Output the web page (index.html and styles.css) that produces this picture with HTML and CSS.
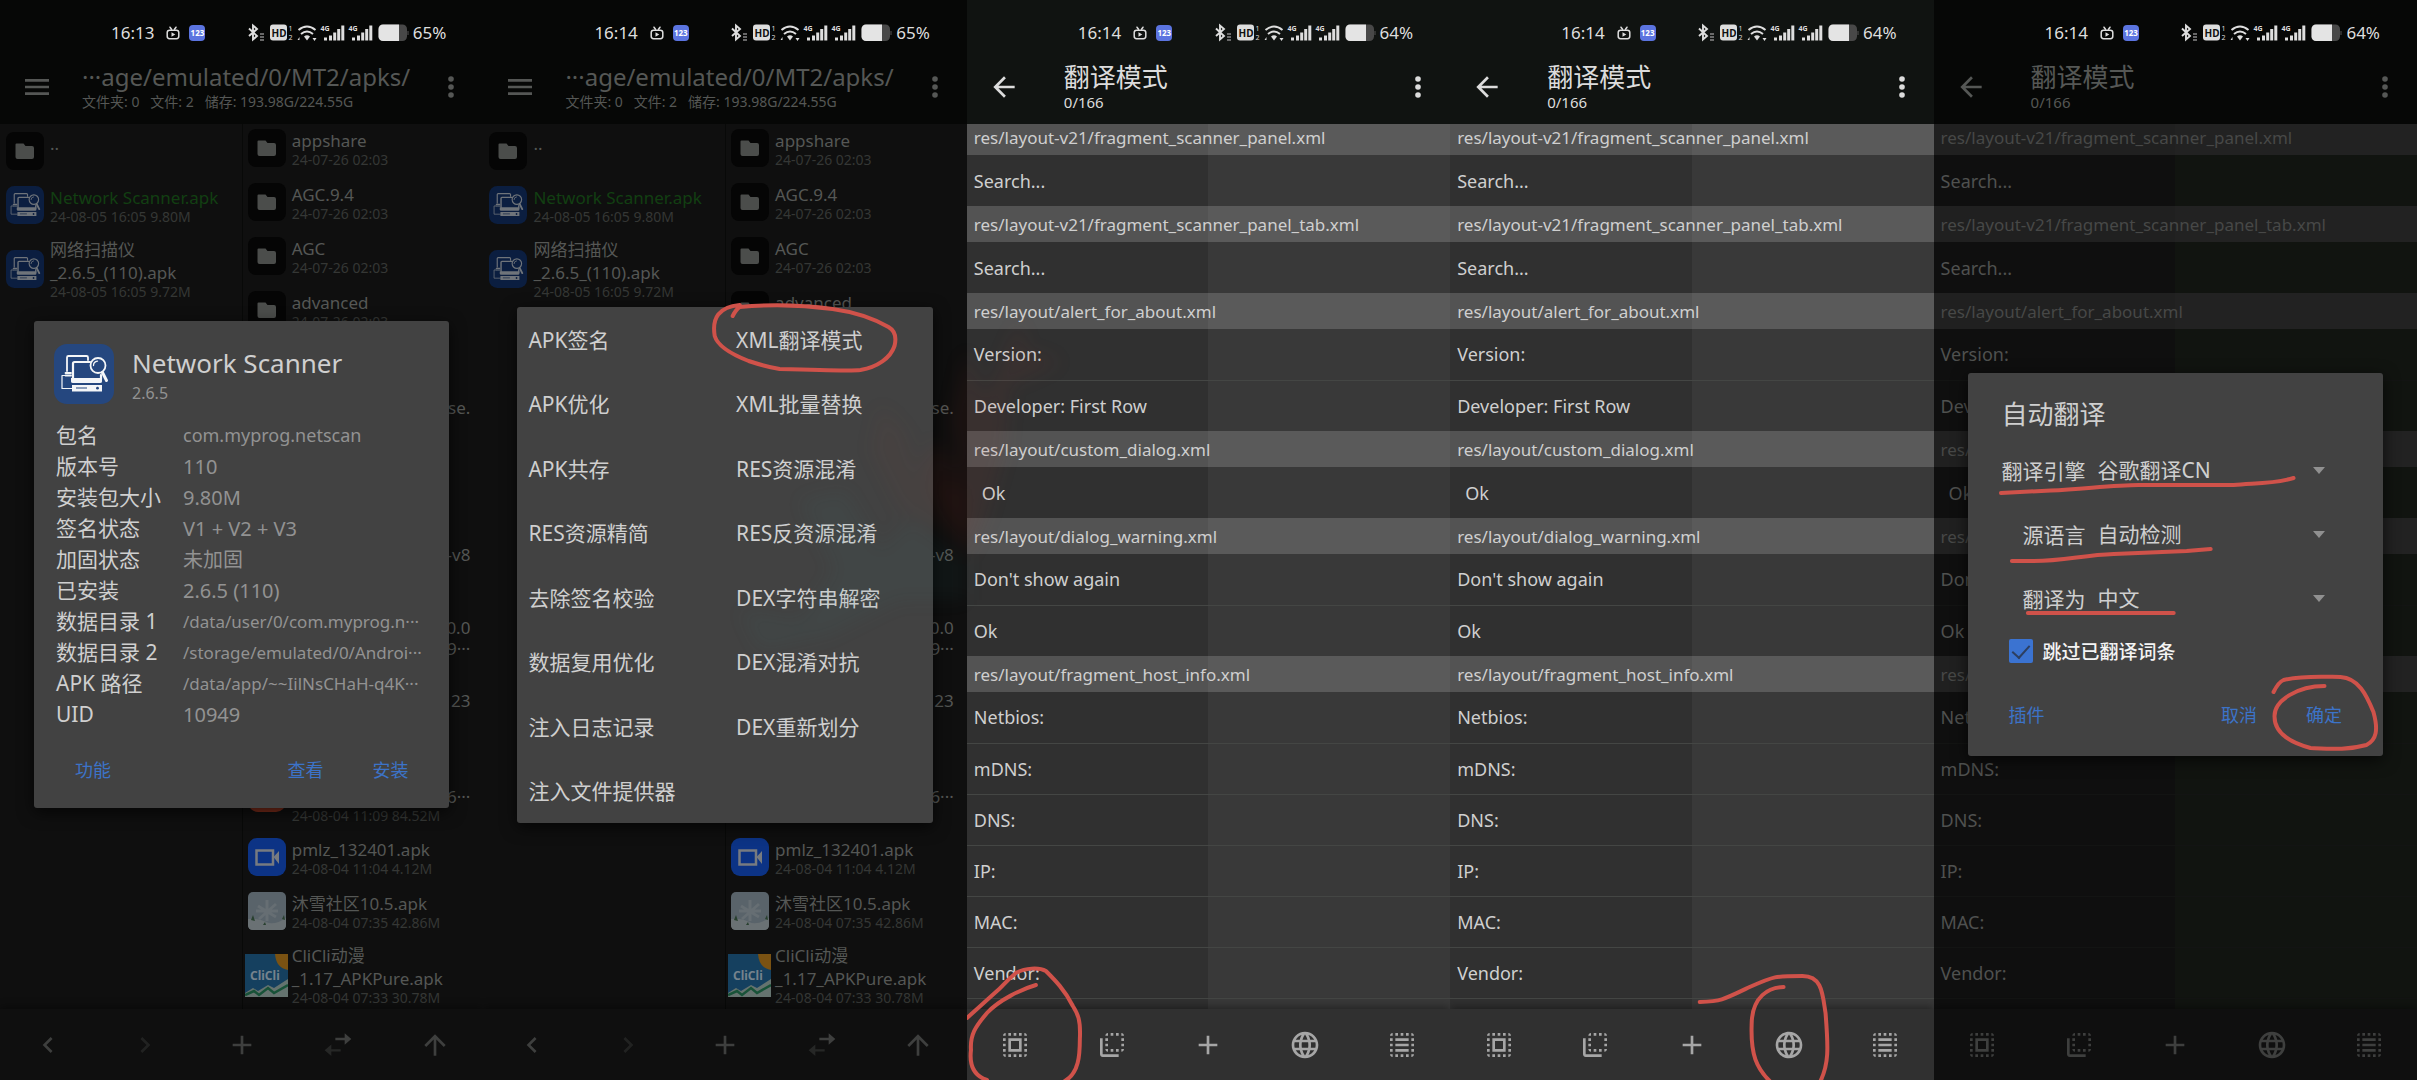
FILE: index.html
```html
<!DOCTYPE html>
<html lang="zh-CN">
<head>
<meta charset="utf-8">
<meta name="viewport" content="width=device-width, initial-scale=1">
<title>MT2 翻译模式</title>
<link rel="stylesheet" href="styles.css">
</head>
<body>
<svg class="defs" aria-hidden="true">
  <symbol id="menu" viewBox="0 0 24 24"><path d="M3 18h18v-2H3v2zm0-5h18v-2H3v2zm0-7v2h18V6H3z"/></symbol>
  <symbol id="more" viewBox="0 0 24 24"><circle cx="12" cy="6" r="2.1"/><circle cx="12" cy="12" r="2.1"/><circle cx="12" cy="18" r="2.1"/></symbol>
  <symbol id="back" viewBox="0 0 24 24"><path d="M20 11H7.83l5.59-5.59L12 4l-8 8 8 8 1.41-1.41L7.83 13H20v-2z"/></symbol>
  <symbol id="left" viewBox="0 0 24 24"><path d="M15.41 7.41L14 6l-6 6 6 6 1.41-1.41L10.83 12z"/></symbol>
  <symbol id="right" viewBox="0 0 24 24"><path d="M10 6L8.59 7.41 13.17 12l-4.58 4.59L10 18l6-6z"/></symbol>
  <symbol id="add" viewBox="0 0 24 24"><path d="M19 13h-6v6h-2v-6H5v-2h6V5h2v6h6v2z"/></symbol>
  <symbol id="swap" viewBox="0 0 24 24"><path d="M10 6.600h7V3.200l5 4.300-5 4.300V8.400h-7z"/><path opacity=".5" d="M14 15.100H7v-3.400l-5 4.300 5 4.300v-3.400h7z"/></symbol>
  <symbol id="up" viewBox="0 0 24 24"><path d="M4 12l1.410 1.410L11 7.830V20h2V7.830l5.580 5.590L20 12l-8-8-8 8z"/></symbol>
  <symbol id="all" viewBox="0 0 24 24"><path d="M3 5h2V3c-1.100 0-2 .9-2 2zm0 8h2v-2H3v2zm4 8h2v-2H7v2zM3 9h2V7H3v2zm10-6h-2v2h2V3zm6 0v2h2c0-1.100-.9-2-2-2zM5 21v-2H3c0 1.100.9 2 2 2zm-2-4h2v-2H3v2zM9 3H7v2h2V3zm2 18h2v-2h-2v2zm8-8h2v-2h-2v2zm0 8c1.100 0 2-.9 2-2h-2v2zm0-12h2V7h-2v2zm0 8h2v-2h-2v2zm-4 4h2v-2h-2v2zm0-16h2V3h-2v2zM7 17h10V7H7v10zm2-8h6v6H9V9z"/></symbol>
  <symbol id="flip" viewBox="0 0 24 24"><path d="M9 7H7v2h2V7zm0 4H7v2h2v-2zm0-8c-1.110 0-2 .9-2 2h2V3zm4 12h-2v2h2v-2zm6-12v2h2c0-1.100-.9-2-2-2zm-6 0h-2v2h2V3zM9 17v-2H7c0 1.100.89 2 2 2zm10-4h2v-2h-2v2zm0-4h2V7h-2v2zm0 8c1.100 0 2-.9 2-2h-2v2zM5 7H3v12c0 1.100.89 2 2 2h12v-2H5V7zm10-2h2V3h-2v2zm0 12h2v-2h-2v2z"/></symbol>
  <symbol id="globe" viewBox="0 0 24 24"><path d="M11.990 2C6.470 2 2 6.480 2 12s4.470 10 9.990 10C17.520 22 22 17.520 22 12S17.520 2 11.990 2zm6.930 6h-2.950c-.32-1.250-.78-2.450-1.380-3.560 1.840.63 3.370 1.910 4.330 3.560zM12 4.040c.83 1.200 1.480 2.530 1.910 3.960h-3.820c.43-1.430 1.080-2.760 1.910-3.960zM4.260 14C4.100 13.360 4 12.690 4 12s.1-1.360.26-2h3.380c-.08.66-.14 1.320-.14 2s.06 1.340.14 2H4.260zm.82 2h2.950c.32 1.250.78 2.450 1.380 3.560-1.840-.63-3.370-1.900-4.330-3.560zm2.950-8H5.080c.96-1.660 2.490-2.930 4.330-3.560C8.810 5.550 8.350 6.750 8.030 8zM12 19.960c-.83-1.200-1.480-2.530-1.910-3.960h3.820c-.43 1.430-1.080 2.760-1.910 3.960zM14.340 14H9.660c-.09-.66-.16-1.320-.16-2s.07-1.350.16-2h4.680c.09.65.16 1.320.16 2s-.07 1.340-.16 2zm.25 5.560c.6-1.110 1.060-2.310 1.380-3.560h2.950c-.96 1.650-2.490 2.930-4.330 3.560zM16.360 14c.08-.66.14-1.320.14-2s-.06-1.340-.14-2h3.380c.16.64.26 1.310.26 2s-.1 1.360-.26 2h-3.380z"/></symbol>
  <symbol id="lines" viewBox="0 0 24 24"><path d="M3 5h2V3c-1.100 0-2 .9-2 2zm0 8h2v-2H3v2zm4 8h2v-2H7v2zM3 9h2V7H3v2zm10-6h-2v2h2V3zm6 0v2h2c0-1.100-.9-2-2-2zM5 21v-2H3c0 1.100.9 2 2 2zm-2-4h2v-2H3v2zM9 3H7v2h2V3zm2 18h2v-2h-2v2zm8-8h2v-2h-2v2zm0 8c1.100 0 2-.9 2-2h-2v2zm0-12h2V7h-2v2zm0 8h2v-2h-2v2zm-4 4h2v-2h-2v2zm0-16h2V3h-2v2zM7 7h10v2H7zM7 11h10v2H7zM7 15h10v2H7z"/></symbol>
  <symbol id="folder" viewBox="0 0 38 38"><rect width="38" height="38" rx="8" fill="#050505"/><path fill="#4b4d4b" d="M10.500 11.500h7l2 2.500h6.500a2 2 0 0 1 2 2v9a2 2 0 0 1-2 2H11.500a2 2 0 0 1-2-2V12.500a1 1 0 0 1 1-1z"/></symbol>
  <symbol id="scanner" viewBox="0 0 60 60">
    <rect width="60" height="60" rx="13" fill="var(--scan-bg)"/>
    <g fill="none" stroke="var(--scan-fg)" stroke-width="1.800" stroke-linejoin="round" stroke-linecap="round">
      <path d="M34 16v-2.500q0-1.500-1.500-1.500H14.500q-1.500 0-1.500 1.500V27"/>
      <path d="M11.500 29H17M11.500 31.500H17"/>
      <path stroke-width="1.200" d="M11 31.500H8V44.500H18"/>
      <path stroke-width="2.200" d="M36 18H20.500q-1.500 0-1.500 1.500V35H47V31"/>
      <circle cx="44" cy="21.500" r="7.500"/>
      <path d="M39.500 21.500q0-3.800 4-4.400" stroke-width="1.300"/>
      <path stroke-width="3" d="M48.500 28.500L52.500 36.500"/>
    </g>
    <path fill="var(--scan-fg)" d="M17 34H48V37.500Q48 39 46 39H19Q17 39 17 37.500zM18 41H48V47.500H18z"/>
    <path d="M22 44H33" stroke="var(--scan-bg)" stroke-width="1"/><circle cx="43.500" cy="44.200" r="1.400" fill="var(--scan-bg)"/>
  </symbol>
  <symbol id="video" viewBox="0 0 38 38"><rect width="38" height="38" rx="9" fill="#0c3385"/><path fill="none" stroke="#777b80" stroke-width="2.500" d="M8.500 12.500H25V26.500H8.500z"/><path fill="#777b80" d="M25.500 19l5.500-6v13z"/></symbol>
  <symbol id="snow" viewBox="0 0 38 38"><rect width="38" height="38" rx="5" fill="#59636a"/><path fill="#6a7174" d="M0 27q10-1 18 3t20-4v7q0 5-5 5H5q-5 0-5-5z"/><path d="M19 8v21M10 14l18 11M28 12L11 27M8 19h22" stroke="#666e73" stroke-width="3"/><path fill="#28402f" d="M3 28l2-5 2 6zM34 27l2-4 1 5zM15 33l2-3 1 3z"/></symbol>
  <symbol id="clicli" viewBox="0 0 43 43"><path fill="#15405f" d="M0 0h43v43H0z"/><path fill="#7a5212" d="M30 0h13v16Q31 14 30 0z"/><path fill="#65736f" d="M0 39l8-5 5 3 10-6 6 3 14-9v18H0z"/><path d="M0 41l9-4 5 4 9-7 6 5 14-8" stroke="#185238" stroke-width="2.500" fill="none"/><text x="5" y="26" font-size="12" font-weight="700" fill="#75838d">CliCli</text></symbol>
  <symbol id="tv" viewBox="0 0 14 14"><g fill="none" stroke="currentColor" stroke-width="1.500" stroke-linecap="round"><rect x="1.200" y="4.200" width="11.600" height="8.500" rx="2.400"/><path d="M4 1.200l1.500 2M10 1.200L8.500 3.200"/></g><path fill="currentColor" d="M5.500 6.200v4.600L9.300 8.500z"/></symbol>
  <symbol id="signals" viewBox="0 0 162 20">
    <path d="M2 5.500L10 13 6 16.500V2.500L10 6 2 13" fill="none" stroke="currentColor" stroke-width="1.900"/>
    <path d="M13 11h4M13 14h4M13 17h4" stroke="#888" stroke-width="1.500"/>
    <rect x="23" y="1.500" width="17" height="16" rx="3" fill="currentColor"/>
    <text x="24.500" y="13.500" font-size="10" font-weight="700" fill="#111">HD</text>
    <text x="41.500" y="8" font-size="7" fill="currentColor">1</text><text x="41.500" y="17" font-size="7" fill="currentColor">2</text>
    <g fill="none" stroke="currentColor" stroke-width="2"><path d="M51.500 7q8.500-7 17 0M54 11q6-5 12 0"/></g>
    <path fill="currentColor" d="M57 13.500q3-2.500 6 0l-3 4zM50.500 17l2-3v3zM65.500 15h4l-2 3z"/>
    <g id="bars" fill="currentColor"><text x="73.500" y="7.500" font-size="7" font-weight="700">4G</text><path d="M77 14.500h3v3h-3zM82 12.500h3v5h-3zM86.200 9.500h3v8h-3zM90.200 6h3v11.500h-3zM94.300 2.500h3v15h-3z"/></g>
    <use href="#bars" x="28"/>
    <rect x="131.500" y="1.500" width="28.500" height="16.500" rx="4.500" fill="#484848"/><path fill="#e4e4e4" d="M136 1.500h16V18h-16a4.500 4.500 0 0 1-4.500-4.500V6a4.500 4.500 0 0 1 4.500-4.500z"/><path d="M161 8v4" stroke="#555"/>
  </symbol>
</svg>

<main class="board">

<section class="phone dim">
  <div class="status"><span>16:13</span><svg class="tv"><use href="#tv"/></svg><span class="badge">123</span><svg class="signals"><use href="#signals"/></svg><span>65%</span></div>
  <header class="bar"><button aria-label="菜单"><svg><use href="#menu"/></svg></button><div class="heading"><p class="path">···age/emulated/0/MT2/apks/</p><p class="count">文件夹: 0 &nbsp; 文件: 2 &nbsp; 储存: 193.98G/224.55G</p></div><button aria-label="更多"><svg><use href="#more"/></svg></button></header>
  <div class="files">
    <ul class="pane">
      <li><svg><use href="#folder"/></svg><div><p>..</p><small>&nbsp;</small></div></li>
      <li><svg><use href="#scanner"/></svg><div><p class="green">Network Scanner.apk</p><small>24-08-05 16:05 9.80M</small></div></li>
      <li><svg><use href="#scanner"/></svg><div><p>网络扫描仪<br>_2.6.5_(110).apk</p><small>24-08-05 16:05 9.72M</small></div></li>
    </ul>
    <ul class="pane scrolled">
      <li><svg><use href="#folder"/></svg><div><p>appshare</p><small>24-07-26 02:03</small></div></li>
      <li><svg><use href="#folder"/></svg><div><p>AGC.9.4</p><small>24-07-26 02:03</small></div></li>
      <li><svg><use href="#folder"/></svg><div><p>AGC</p><small>24-07-26 02:03</small></div></li>
      <li><svg><use href="#folder"/></svg><div><p>advanced</p><small>24-07-26 02:03</small></div></li>
      <li class="tails"><span>se.</span><span>-v8</span><span>0.0</span><span>9···</span><span>23</span></li>
      <li><span class="red-icon"></span><div class="wide"><p>&nbsp;<br><span class="end">6···</span></p><small>24-08-04 11:09 84.52M</small></div></li>
      <li><svg><use href="#video"/></svg><div><p>pmlz_132401.apk</p><small>24-08-04 11:04 4.12M</small></div></li>
      <li><svg><use href="#snow"/></svg><div><p>沐雪社区10.5.apk</p><small>24-08-04 07:35 42.86M</small></div></li>
      <li><svg class="full"><use href="#clicli"/></svg><div><p>CliCli动漫<br>_1.17_APKPure.apk</p><small>24-08-04 07:33 30.78M</small></div></li>
    </ul>
  </div>
  <nav class="tools"><button aria-label="后退"><svg><use href="#left"/></svg></button><button class="off" aria-label="前进"><svg><use href="#right"/></svg></button><button aria-label="新建"><svg><use href="#add"/></svg></button><button aria-label="同步"><svg><use href="#swap"/></svg></button><button aria-label="上级"><svg><use href="#up"/></svg></button></nav>
  <div class="overlay">
    <div class="dialog" role="dialog" aria-label="Network Scanner">
      <div class="app"><svg><use href="#scanner"/></svg><div><h2>Network Scanner</h2><p>2.6.5</p></div></div>
      <dl class="info">
        <dt>包名</dt><dd class="package">com.myprog.netscan</dd>
        <dt>版本号</dt><dd>110</dd>
        <dt>安装包大小</dt><dd>9.80M</dd>
        <dt>签名状态</dt><dd>V1 + V2 + V3</dd>
        <dt>加固状态</dt><dd>未加固</dd>
        <dt>已安装</dt><dd>2.6.5 (110)</dd>
        <dt>数据目录 1</dt><dd class="long">/data/user/0/com.myprog.n···</dd>
        <dt>数据目录 2</dt><dd class="long">/storage/emulated/0/Androi···</dd>
        <dt>APK 路径</dt><dd class="long">/data/app/~~IilNsCHaH-q4K···</dd>
        <dt>UID</dt><dd>10949</dd>
      </dl>
      <div class="actions"><button>功能</button><button>查看</button><button>安装</button></div>
    </div>
  </div>
</section>

<section class="phone dim">
  <div class="status"><span>16:14</span><svg class="tv"><use href="#tv"/></svg><span class="badge">123</span><svg class="signals"><use href="#signals"/></svg><span>65%</span></div>
  <header class="bar"><button aria-label="菜单"><svg><use href="#menu"/></svg></button><div class="heading"><p class="path">···age/emulated/0/MT2/apks/</p><p class="count">文件夹: 0 &nbsp; 文件: 2 &nbsp; 储存: 193.98G/224.55G</p></div><button aria-label="更多"><svg><use href="#more"/></svg></button></header>
  <div class="files">
    <ul class="pane">
      <li><svg><use href="#folder"/></svg><div><p>..</p><small>&nbsp;</small></div></li>
      <li><svg><use href="#scanner"/></svg><div><p class="green">Network Scanner.apk</p><small>24-08-05 16:05 9.80M</small></div></li>
      <li><svg><use href="#scanner"/></svg><div><p>网络扫描仪<br>_2.6.5_(110).apk</p><small>24-08-05 16:05 9.72M</small></div></li>
    </ul>
    <ul class="pane scrolled">
      <li><svg><use href="#folder"/></svg><div><p>appshare</p><small>24-07-26 02:03</small></div></li>
      <li><svg><use href="#folder"/></svg><div><p>AGC.9.4</p><small>24-07-26 02:03</small></div></li>
      <li><svg><use href="#folder"/></svg><div><p>AGC</p><small>24-07-26 02:03</small></div></li>
      <li><svg><use href="#folder"/></svg><div><p>advanced</p><small>&nbsp;</small></div></li>
      <li class="tails"><span>se.</span><span>-v8</span><span>0.0</span><span>9···</span><span>23</span></li>
      <li><span class="red-icon"></span><div class="wide"><p>&nbsp;<br><span class="end">6···</span></p><small>&nbsp;</small></div></li>
      <li><svg><use href="#video"/></svg><div><p>pmlz_132401.apk</p><small>24-08-04 11:04 4.12M</small></div></li>
      <li><svg><use href="#snow"/></svg><div><p>沐雪社区10.5.apk</p><small>24-08-04 07:35 42.86M</small></div></li>
      <li><svg class="full"><use href="#clicli"/></svg><div><p>CliCli动漫<br>_1.17_APKPure.apk</p><small>24-08-04 07:33 30.78M</small></div></li>
    </ul>
  </div>
  <nav class="tools"><button aria-label="后退"><svg><use href="#left"/></svg></button><button class="off" aria-label="前进"><svg><use href="#right"/></svg></button><button aria-label="新建"><svg><use href="#add"/></svg></button><button aria-label="同步"><svg><use href="#swap"/></svg></button><button aria-label="上级"><svg><use href="#up"/></svg></button></nav>
  <div class="overlay">
    <div class="dialog functions" role="dialog" aria-label="功能">
      <button>APK签名</button><button>XML翻译模式</button>
      <button>APK优化</button><button>XML批量替换</button>
      <button>APK共存</button><button>RES资源混淆</button>
      <button>RES资源精简</button><button>RES反资源混淆</button>
      <button>去除签名校验</button><button>DEX字符串解密</button>
      <button>数据复用优化</button><button>DEX混淆对抗</button>
      <button>注入日志记录</button><button>DEX重新划分</button>
      <button>注入文件提供器</button>
    </div>
  </div>
  <svg class="ink" viewBox="0 0 484 1080" preserveAspectRatio="none"><path d="M250 316C252 312 254 309 257 307C290 304 320 305 350 309C372 312 392 319 406 327C413 331 414 338 412 346C408 358 395 367 378 370C370 371 330 370 297 369C285 367 275 364 266 361C248 354 235 346 232 336C229 318 236 307 257 305"/></svg>
</section>

<section class="phone">
  <div class="status"><span>16:14</span><svg class="tv"><use href="#tv"/></svg><span class="badge">123</span><svg class="signals"><use href="#signals"/></svg><span>64%</span></div>
  <header class="bar"><button aria-label="返回"><svg><use href="#back"/></svg></button><div class="heading inset"><h1>翻译模式</h1><p class="total">0/166</p></div><button aria-label="更多"><svg><use href="#more"/></svg></button></header>
  <div class="strings">
    <table>
      <tr><th colspan="2">res/layout-v21/fragment_scanner_panel.xml</th></tr>
      <tr><td>Search...</td><td></td></tr>
      <tr><th colspan="2">res/layout-v21/fragment_scanner_panel_tab.xml</th></tr>
      <tr><td>Search...</td><td></td></tr>
      <tr><th colspan="2">res/layout/alert_for_about.xml</th></tr>
      <tr><td>Version:</td><td></td></tr>
      <tr><td>Developer: First Row</td><td></td></tr>
      <tr><th colspan="2">res/layout/custom_dialog.xml</th></tr>
      <tr><td class="spaced">Ok</td><td></td></tr>
      <tr><th colspan="2">res/layout/dialog_warning.xml</th></tr>
      <tr><td>Don't show again</td><td></td></tr>
      <tr><td>Ok</td><td></td></tr>
      <tr><th colspan="2">res/layout/fragment_host_info.xml</th></tr>
      <tr><td>Netbios:</td><td></td></tr>
      <tr><td>mDNS:</td><td></td></tr>
      <tr><td>DNS:</td><td></td></tr>
      <tr><td>IP:</td><td></td></tr>
      <tr><td>MAC:</td><td></td></tr>
      <tr><td>Vendor:</td><td></td></tr>
      <tr><td></td><td></td></tr>
    </table>
  </div>
  <nav class="tools"><button aria-label="全选"><svg><use href="#all"/></svg></button><button aria-label="反选"><svg><use href="#flip"/></svg></button><button aria-label="添加"><svg><use href="#add"/></svg></button><button aria-label="翻译"><svg><use href="#globe"/></svg></button><button aria-label="列表"><svg><use href="#lines"/></svg></button></nav>
  <svg class="ink" viewBox="0 0 484 1080" preserveAspectRatio="none"><path d="M69 985C55 989 32 1000 20 1013C8 1027 3 1035 4 1050C2 1066 8 1076 20 1080M98 1081C112 1073 113 1055 113 1039C114 1020 111 1014 106 1006C98 990 88 980 79 971C72 967 58 968 49 973C38 982 36 986 30 991L0 1018"/></svg>
</section>

<section class="phone">
  <div class="status"><span>16:14</span><svg class="tv"><use href="#tv"/></svg><span class="badge">123</span><svg class="signals"><use href="#signals"/></svg><span>64%</span></div>
  <header class="bar"><button aria-label="返回"><svg><use href="#back"/></svg></button><div class="heading inset"><h1>翻译模式</h1><p class="total">0/166</p></div><button aria-label="更多"><svg><use href="#more"/></svg></button></header>
  <div class="strings">
    <table>
      <tr><th colspan="2">res/layout-v21/fragment_scanner_panel.xml</th></tr>
      <tr><td>Search...</td><td></td></tr>
      <tr><th colspan="2">res/layout-v21/fragment_scanner_panel_tab.xml</th></tr>
      <tr><td>Search...</td><td></td></tr>
      <tr><th colspan="2">res/layout/alert_for_about.xml</th></tr>
      <tr><td>Version:</td><td></td></tr>
      <tr><td>Developer: First Row</td><td></td></tr>
      <tr><th colspan="2">res/layout/custom_dialog.xml</th></tr>
      <tr><td class="spaced">Ok</td><td></td></tr>
      <tr><th colspan="2">res/layout/dialog_warning.xml</th></tr>
      <tr><td>Don't show again</td><td></td></tr>
      <tr><td>Ok</td><td></td></tr>
      <tr><th colspan="2">res/layout/fragment_host_info.xml</th></tr>
      <tr><td>Netbios:</td><td></td></tr>
      <tr><td>mDNS:</td><td></td></tr>
      <tr><td>DNS:</td><td></td></tr>
      <tr><td>IP:</td><td></td></tr>
      <tr><td>MAC:</td><td></td></tr>
      <tr><td>Vendor:</td><td></td></tr>
      <tr><td></td><td></td></tr>
    </table>
  </div>
  <nav class="tools"><button aria-label="全选"><svg><use href="#all"/></svg></button><button aria-label="反选"><svg><use href="#flip"/></svg></button><button aria-label="添加"><svg><use href="#add"/></svg></button><button aria-label="翻译"><svg><use href="#globe"/></svg></button><button aria-label="列表"><svg><use href="#lines"/></svg></button></nav>
  <svg class="ink" viewBox="0 0 484 1080" preserveAspectRatio="none"><path d="M250 1002C272 1001 273 1000 300 987C325 976 325 976 353 976C373 976 373 995 376 1013C379 1050 379 1064 371 1081M334 987C320 987 302 996 302 1025C301 1055 307 1068 320 1081"/></svg>
</section>

<section class="phone dim">
  <div class="status"><span>16:14</span><svg class="tv"><use href="#tv"/></svg><span class="badge">123</span><svg class="signals"><use href="#signals"/></svg><span>64%</span></div>
  <header class="bar"><button aria-label="返回"><svg><use href="#back"/></svg></button><div class="heading inset"><h1>翻译模式</h1><p class="total">0/166</p></div><button aria-label="更多"><svg><use href="#more"/></svg></button></header>
  <div class="strings">
    <table>
      <tr><th colspan="2">res/layout-v21/fragment_scanner_panel.xml</th></tr>
      <tr><td>Search...</td><td></td></tr>
      <tr><th colspan="2">res/layout-v21/fragment_scanner_panel_tab.xml</th></tr>
      <tr><td>Search...</td><td></td></tr>
      <tr><th colspan="2">res/layout/alert_for_about.xml</th></tr>
      <tr><td>Version:</td><td></td></tr>
      <tr><td>Dev</td><td></td></tr>
      <tr><th colspan="2">res/</th></tr>
      <tr><td class="spaced">Ok</td><td></td></tr>
      <tr><th colspan="2">res/</th></tr>
      <tr><td>Don</td><td></td></tr>
      <tr><td>Ok</td><td></td></tr>
      <tr><th colspan="2">res/</th></tr>
      <tr><td>Net</td><td></td></tr>
      <tr><td>mDNS:</td><td></td></tr>
      <tr><td>DNS:</td><td></td></tr>
      <tr><td>IP:</td><td></td></tr>
      <tr><td>MAC:</td><td></td></tr>
      <tr><td>Vendor:</td><td></td></tr>
      <tr><td></td><td></td></tr>
    </table>
  </div>
  <nav class="tools"><button aria-label="全选"><svg><use href="#all"/></svg></button><button aria-label="反选"><svg><use href="#flip"/></svg></button><button aria-label="添加"><svg><use href="#add"/></svg></button><button aria-label="翻译"><svg><use href="#globe"/></svg></button><button aria-label="列表"><svg><use href="#lines"/></svg></button></nav>
  <div class="overlay">
    <form class="dialog" role="dialog" aria-label="自动翻译">
      <h2 class="form-title">自动翻译</h2>
      <div class="field"><label for="engine">翻译引擎</label><select id="engine"><option>谷歌翻译CN</option></select></div>
      <div class="field"><label for="source">源语言</label><select id="source"><option>自动检测</option></select></div>
      <div class="field"><label for="target">翻译为</label><select id="target"><option>中文</option></select></div>
      <label class="check"><input type="checkbox" checked>跳过已翻译词条</label>
      <div class="actions tall"><button type="button">插件</button><button type="button">取消</button><button type="button">确定</button></div>
    </form>
  </div>
  <svg class="ink" viewBox="0 0 484 1080" preserveAspectRatio="none"><path d="M67 493L117 490.500C150 489 180 485 205 485H300C320 483 340 484 360 478M78 561H100C130 561 150 555 180 554L253 551 277 549M94 613H240M340 692Q345 682 350 680C370 675 395 677 407 677C425 678 433 695 440 712C445 730 443 740 433 745C415 750 400 749 377 748C355 742 341 733 341 717C340 700 365 686 391 686"/></svg>
</section>

<svg class="coral" viewBox="0 0 2417 1080" preserveAspectRatio="none" aria-hidden="true">
  <path fill="#a33028" fill-opacity=".08" d="M966 350L985 400 1020 320 1025 350 1062 362 1010 385 1005 450 985 520 966 560 940 500 920 470 935 440 960 470 950 420z"/>
  <path fill="#a0402c" fill-opacity=".05" d="M880 405L905 430 920 480 966 490 966 540 900 510 870 450z"/>
  <path fill="#3a8090" fill-opacity=".06" d="M966 560L910 520 880 550 845 490 800 500 835 570 800 620 740 610 760 650 830 635 900 600 966 600z"/>
</svg>
</main>
</body>
</html>
```
FILE: styles.css
```css
* { box-sizing: border-box; }

body {
  margin: 0;
  background: #060606;
  font-family: "Noto Sans", "Noto Sans CJK SC", sans-serif;
}

h1, h2, p, ul, dl, dd { margin: 0; padding: 0; font-weight: 400; }

button {
  padding: 0;
  border: 0;
  background: none;
  color: inherit;
  font: inherit;
  cursor: pointer;
}

.defs { display: none; }

.board {
  position: relative;
  display: grid;
  grid-template-columns: repeat(5, minmax(0, 1fr));
}

.phone {
  --bar: #101311;
  --bar-text: #dcdcdc;
  --row: #303030;
  --row-alt: #393939;
  --group: #535353;
  --group-alt: #5a5a5a;
  --line: #444644;
  --text: #cfcfcf;
  --tool: #a6a6a6;
  --scan-bg: #0b1e40;
  --scan-fg: #6f747a;
  position: relative;
  display: flex;
  flex-direction: column;
  height: 100vh;
  overflow: hidden;
  background: var(--row);
}

.dim {
  --bar: #060706;
  --bar-text: #555755;
  --row: #0f0f0f;
  --row-alt: #111410;
  --group: #202020;
  --group-alt: #222222;
  --line: #131413;
  --text: #4f514f;
  --tool: #3e3f3e;
}

/* Status bar */
.status {
  display: flex;
  align-items: center;
  height: 49px;
  padding: 16px 37px 0 111px;
  background: var(--bar);
  color: #dedede;
  font-size: 17px;
  line-height: 24px;
  flex: none;
}
.tv { width: 14px; height: 14px; margin: 0 9px 0 12px; }
.badge {
  width: 16px;
  height: 16px;
  border-radius: 4px;
  background: #5b74e0;
  color: #ffffff;
  font-size: 8px;
  font-weight: 700;
  line-height: 16px;
  text-align: center;
}
.signals { width: 162px; height: 20px; margin: 0 4px 0 auto; }

/* App bar */
.bar {
  display: flex;
  align-items: center;
  height: 75px;
  padding: 0 16px 0 21px;
  background: var(--bar);
  color: var(--bar-text);
  flex: none;
}
.bar svg, .tools svg { display: block; width: 32px; height: 32px; fill: currentColor; }
.heading { flex: 1; padding-left: 29px; white-space: nowrap; }
.inset { padding-left: 44px; }
.path { font-size: 24px; line-height: 30px; }
.count { font-size: 14px; line-height: 20px; }
h1 { font-size: 26px; line-height: 30px; }
.total { font-size: 15px; line-height: 20px; }

/* File lists */
.files {
  display: grid;
  grid-template-columns: 1fr 1fr;
  flex: 1;
  min-height: 0;
  overflow: hidden;
}
.pane { min-width: 0; list-style: none; color: #555755; white-space: nowrap; }
.scrolled { margin-top: -3px; border-left: 1px solid #080908; }
.pane li {
  display: flex;
  align-items: center;
  gap: 6px;
  min-height: 54px;
  padding: 6px 0 6px 6px;
}
.scrolled li { padding-left: 5px; }
.pane svg, .red-icon { width: 38px; height: 38px; flex: none; }
.pane .full { width: 43px; height: 43px; margin: 0 -2px 0 -3px; }
.red-icon { border-radius: 10px; background: #7c2c1a; }
.pane p { font-size: 17px; line-height: 23px; }
.pane small { display: block; color: #353735; font-size: 14px; line-height: 16px; }
.pane .green { color: #123f12; }
.wide { flex: 1; }
.end { display: block; padding-right: 13px; text-align: right; }
.pane .tails {
  display: grid;
  grid-template-rows: 82px 147px 73px 21px 52px;
  gap: 0;
  height: 419px;
  padding: 0 13px 0 0;
  align-items: end;
  justify-items: end;
  align-content: start;
  font-size: 17px;
  line-height: 22px;
}

/* Translation strings */
.strings { flex: 1; min-height: 0; overflow: hidden; background: var(--row); }
table {
  width: 100%;
  margin-top: -5px;
  border-collapse: collapse;
  table-layout: fixed;
  color: var(--text);
  text-align: left;
}
th, td { padding: 0 7px; font-weight: 400; white-space: nowrap; }
th {
  height: 36px;
  background: linear-gradient(90deg, var(--group) 50%, var(--group-alt) 50%);
  font-size: 17px;
}
td { height: 51px; background: var(--row); font-size: 18px; }
td + td { background: var(--row-alt); }
td.spaced { padding-left: 15px; }
tr:has(td) + tr td { border-top: 1px solid var(--line); }
.dim th { color: #474847; }

/* Bottom tools */
.tools {
  position: relative;
  display: grid;
  grid-template-columns: repeat(5, 1fr);
  place-items: center;
  height: 71px;
  background: var(--row);
  box-shadow: 0 -2px 8px #00000066;
  color: var(--tool);
  flex: none;
}
.tools .off { opacity: .4; }

/* Dialogs */
.overlay {
  position: absolute;
  inset: 49px 0 0;
  display: flex;
  align-items: center;
  padding: 0 34px;
}
.dialog {
  --scan-bg: #25477f;
  --scan-fg: #f4f6f8;
  width: 100%;
  border-radius: 3px;
  background: #424242;
  box-shadow: 0 4px 16px #000000aa;
  color: #cfcfcf;
}
.app { display: flex; gap: 18px; padding: 23px 20px 14px; }
.app svg { width: 60px; height: 60px; flex: none; }
.app h2 { padding-top: 2px; font-size: 26px; line-height: 34px; }
.app p { color: #929292; font-size: 16px; line-height: 26px; }
.info {
  display: grid;
  grid-template-columns: 127px 1fr;
  padding-left: 22px;
  font-size: 21px;
  line-height: 31px;
  white-space: nowrap;
}
.info dt, .info dd { height: 31px; }
.info dd { color: #929292; font-size: 20px; }
.info .package { font-size: 18px; }
.info .long { font-size: 17px; }
.actions {
  display: flex;
  align-items: center;
  gap: 49px;
  height: 78px;
  padding: 0 41px;
  color: #3c73c8;
  font-size: 18px;
}
.actions button:first-child { margin-right: auto; }
.tall { height: 84px; }

.functions {
  display: grid;
  grid-template-columns: 1fr 1fr;
  grid-auto-rows: 1fr;
  min-height: 516px;
}
.functions button {
  padding-left: 11px;
  font-size: 21px;
  text-align: left;
}

.form-title { padding: 26px 34px 9px; font-size: 26px; line-height: 30px; }
.field {
  position: relative;
  display: grid;
  grid-template-columns: 118px 1fr;
  gap: 12px;
  align-items: center;
  height: 64px;
  padding-right: 50px;
  font-size: 21px;
}
.field label { text-align: right; }
.field select {
  height: 48px;
  padding: 0;
  border: 0;
  background: none;
  color: inherit;
  font: inherit;
  appearance: none;
}
.field::after {
  content: "";
  position: absolute;
  right: 58px;
  border: solid transparent;
  border-width: 7px 6px 0;
  border-top-color: #909090;
}
.check {
  display: flex;
  align-items: center;
  gap: 10px;
  height: 42px;
  padding-left: 41px;
  color: #f4f4f4;
  font-size: 19px;
  font-weight: 500;
}
.check input {
  display: grid;
  place-items: center;
  width: 24px;
  height: 24px;
  margin: 0;
  border-radius: 2px;
  background: #3b73d1;
  appearance: none;
}
.check input:checked::after {
  content: "";
  width: 8px;
  height: 15px;
  margin-bottom: 4px;
  border: solid #2d3f60;
  border-width: 0 2px 2px 0;
  transform: rotate(42deg);
}

/* Pen marks and wallpaper tint */
.ink {
  position: absolute;
  inset: 0;
  width: 100%;
  height: 100%;
  fill: none;
  stroke: #d0524a;
  stroke-width: 4px;
  stroke-linecap: round;
  stroke-linejoin: round;
  pointer-events: none;
}
.coral {
  position: absolute;
  inset: 0;
  width: 100%;
  height: 100%;
  filter: blur(9px);
  pointer-events: none;
}
```
